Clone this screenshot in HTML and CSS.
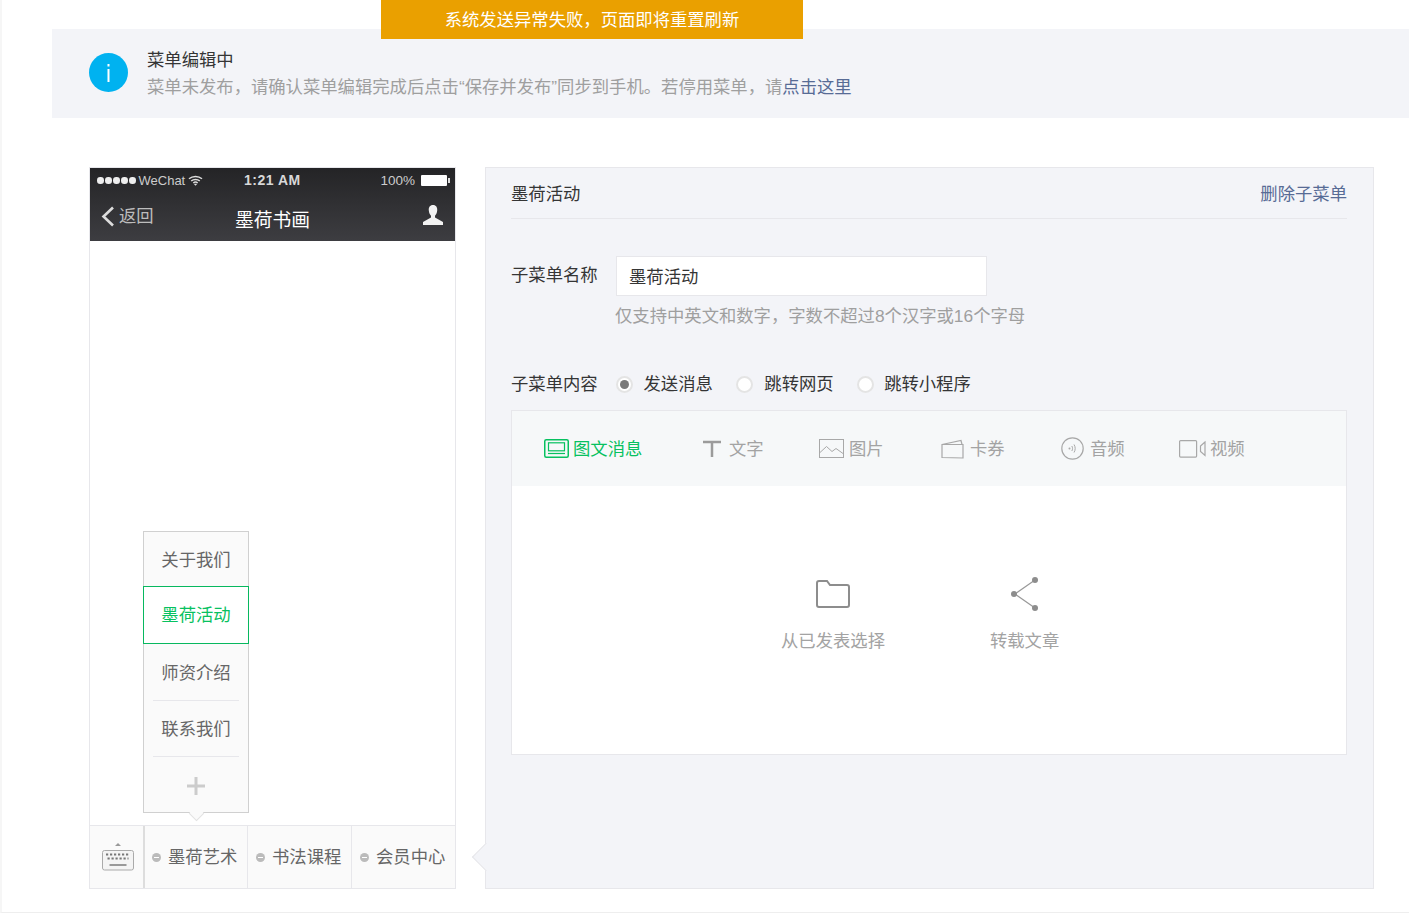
FILE: index.html
```html
<!DOCTYPE html>
<html lang="zh-CN">
<head>
  <meta charset="UTF-8" />
  <title>菜单编辑</title>
  <link rel="stylesheet" href="styles.css">
</head>
<body>
  <div class="page">
    <div class="toast">系统发送异常失败，页面即将重置刷新</div>

    <div class="notice">
      <div class="notice-icon">
        <svg width="39" height="39" viewBox="0 0 39 39">
          <circle cx="19.5" cy="19.5" r="19.5" fill="#00b2f0"/>
          <rect x="18.5" y="11" width="2" height="2.5" fill="#fff"/>
          <rect x="18.5" y="16" width="2" height="13" fill="#fff"/>
        </svg>
      </div>
      <div class="notice-text">
        <div class="notice-title">菜单编辑中</div>
        <div class="notice-desc">菜单未发布，请确认菜单编辑完成后点击“保存并发布”同步到手机。若停用菜单，请<a class="link">点击这里</a></div>
      </div>
    </div>

    <div class="main">
      <div class="phone">
        <div class="phone-head">
          <div class="status">
            <div class="status-left">
              <span class="dots"><i></i><i></i><i></i><i></i><i></i></span>
              <span class="carrier">WeChat</span>
              <svg width="15" height="11" viewBox="0 0 15 11">
                <path d="M1 3.8C4.6 .6 10.4 .6 14 3.8M3.2 6C5.6 3.9 9.4 3.9 11.8 6M5.3 8C6.5 7 8.5 7 9.7 8" fill="none" stroke="#ddd" stroke-width="1.5"/>
                <path d="M7.5 10.8 5.9 9.1C6.8 8.5 8.2 8.5 9.1 9.1Z" fill="#ddd"/>
              </svg>
            </div>
            <div class="clock">1:21 AM</div>
            <div class="status-right">
              <span>100%</span>
              <span class="battery"></span>
            </div>
          </div>
          <div class="nav">
            <div class="nav-back">
              <svg width="14" height="21" viewBox="0 0 14 21"><path d="M12 1.5 2.5 10.5 12 19.5" fill="none" stroke="#ddd" stroke-width="2.6"/></svg>
              <span>返回</span>
            </div>
            <div class="nav-title">墨荷书画</div>
            <svg class="nav-user" width="22" height="22" viewBox="0 0 22 22">
              <path d="M11 1C7.9 1 6.5 3.4 6.8 6.5 7 9 8 10.7 9 11.7V13.5L1 18V21H21V18L13 13.5V11.7C14 10.7 15 9 15.2 6.5 15.5 3.4 14.1 1 11 1Z" fill="#f2f2f2"/>
            </svg>
          </div>
        </div>

        <div class="phone-body">
          <div class="submenu">
            <div class="sub-item">关于我们</div>
            <div class="sub-item is-current">墨荷活动</div>
            <div class="sub-item">师资介绍</div>
            <div class="sub-item">联系我们</div>
            <div class="sub-add">
              <svg width="18" height="18" viewBox="0 0 18 18"><path d="M9 0V18M0 9H18" stroke="#ccc" stroke-width="3"/></svg>
            </div>
          </div>
        </div>

        <div class="tabbar">
          <div class="tab-keyboard">
            <svg width="32" height="29" viewBox="0 0 32 29">
              <path d="M13 4 16 1 19 4Z" fill="#999"/>
              <rect x=".5" y="8.5" width="31" height="19.5" rx="2" fill="#f4f4f4" stroke="#aaa"/>
              <path d="M4 12.5H28M5.5 16.5H26.5" stroke="#777" stroke-width="2.2" stroke-dasharray="2.2 1.8"/>
              <path d="M7.5 23H24.5" stroke="#999" stroke-width="2"/>
            </svg>
          </div>
          <div class="tab-cell"><span class="tab-dot"></span>墨荷艺术</div>
          <div class="tab-cell"><span class="tab-dot"></span>书法课程</div>
          <div class="tab-cell"><span class="tab-dot"></span>会员中心</div>
        </div>
      </div>

      <div class="editor">
        <div class="editor-head">
          <span>墨荷活动</span>
          <a class="link">删除子菜单</a>
        </div>

        <div class="field-name">
          <label class="field-label">子菜单名称</label>
          <div class="name-input">墨荷活动</div>
        </div>
        <div class="field-hint">仅支持中英文和数字，字数不超过8个汉字或16个字母</div>

        <div class="field-radio">
          <label class="field-label">子菜单内容</label>
          <span class="radio is-on"></span><span class="radio-text first">发送消息</span>
          <span class="radio"></span><span class="radio-text second">跳转网页</span>
          <span class="radio"></span><span class="radio-text">跳转小程序</span>
        </div>

        <div class="content-box">
          <div class="type-tabs">
            <div class="type-tab is-current">
              <svg width="25" height="19" viewBox="0 0 25 19">
                <rect x=".75" y=".75" width="23.5" height="17.5" rx="1.5" fill="none" stroke="#07c160" stroke-width="1.5"/>
                <rect x="4.5" y="3.8" width="16" height="8" fill="none" stroke="#07c160" stroke-width="1.2"/>
                <path d="M4 14.5H21" stroke="#07c160" stroke-width="1.2"/>
              </svg>
              <span>图文消息</span>
            </div>
            <div class="type-tab">
              <svg class="icon-text" width="20" height="17" viewBox="0 0 20 17"><path d="M1 2H19M10 2V17" fill="none" stroke="#9b9b9b" stroke-width="2.5"/></svg>
              <span>文字</span>
            </div>
            <div class="type-tab">
              <svg class="icon-pic" width="25" height="19" viewBox="0 0 25 19">
                <rect x=".5" y=".5" width="24" height="18" fill="none" stroke="#a8a8a8"/>
                <path d="M1 13.5 7.5 7.5 13 12.5 17 9.5 24 14.5" fill="none" stroke="#a8a8a8"/>
              </svg>
              <span>图片</span>
            </div>
            <div class="type-tab">
              <svg class="icon-card" width="23" height="20" viewBox="0 0 23 20">
                <path d="M1 5.5 20 1.5 21 5.5M1 5.5H22V19L1 18.5Z" fill="none" stroke="#a8a8a8" stroke-width="1.2"/>
              </svg>
              <span>卡券</span>
            </div>
            <div class="type-tab">
              <svg class="icon-card" width="23" height="23" viewBox="0 0 23 23">
                <circle cx="11.5" cy="11.5" r="10.7" fill="none" stroke="#a8a8a8" stroke-width="1.2"/>
                <circle cx="8.5" cy="11.5" r="1" fill="#a8a8a8"/>
                <path d="M10.8 9C11.8 10.5 11.8 12.5 10.8 14M13 7.5C14.6 10 14.6 13 13 15.5" fill="none" stroke="#a8a8a8"/>
              </svg>
              <span>音频</span>
            </div>
            <div class="type-tab">
              <svg width="27" height="18" viewBox="0 0 27 18">
                <rect x=".6" y=".6" width="17" height="16.5" rx="1" fill="none" stroke="#a8a8a8" stroke-width="1.2"/>
                <path d="M26 2 21.5 6V11.5L26 15.5Z" fill="none" stroke="#a8a8a8" stroke-width="1.2"/>
              </svg>
              <span>视频</span>
            </div>
          </div>

          <div class="pick-row">
            <div class="pick pick-folder">
              <svg width="36" height="30" viewBox="0 0 36 30">
                <path d="M2 4C2 2.9 2.7 2 4 2H12L15 6H32C33.2 6 34 6.8 34 8V26C34 27.2 33.2 28 32 28H4C2.8 28 2 27.2 2 26Z" fill="none" stroke="#8d8d8d" stroke-width="2"/>
              </svg>
              <span>从已发表选择</span>
            </div>
            <div class="pick pick-share">
              <svg width="30" height="36" viewBox="0 0 30 36">
                <path d="M25 4 5 18 25 32" fill="none" stroke="#999" stroke-width="1.2"/>
                <circle cx="25" cy="4" r="3" fill="#8d8d8d"/>
                <circle cx="4" cy="18" r="3" fill="#8d8d8d"/>
                <circle cx="25" cy="32" r="3" fill="#8d8d8d"/>
              </svg>
              <span>转载文章</span>
            </div>
          </div>
        </div>

        <span class="editor-arrow"></span>
      </div>
    </div>
  </div>
</body>
</html>
```

FILE: styles.css
```css
* {
  margin: 0;
  padding: 0;
  box-sizing: border-box;
}

body {
  font-family: "Liberation Sans", "Noto Sans CJK SC", sans-serif;
  font-size: 17.33px;
  line-height: 26px;
  color: #353535;
  background: #fff;
  overflow: hidden;
}

.page {
  position: relative;
  height: 913px;
  border-left: 2px solid #f6f6f6;
  border-bottom: 1px solid #eee;
  padding: 29px 0 0 50px;
}

.link {
  color: #576b95;
}

.toast {
  position: absolute;
  top: 0;
  left: 379px;
  width: 422px;
  height: 39px;
  line-height: 40px;
  background: #eaa000;
  color: #fff;
  text-align: center;
}

/* notice */
.notice {
  display: flex;
  height: 89px;
  background: #f3f4f8;
  padding-left: 37px;
  padding-top: 24px;
}

.notice-icon {
  width: 58px;
  flex: none;
}

.notice-text {
  margin-top: -6px;
}

.notice-title {
  line-height: 27px;
}

.notice-desc {
  color: #9f9f9f;
  line-height: 27px;
}

/* phone */
.main {
  display: flex;
  margin: 49px 0 0 37px;
}

.phone {
  width: 367px;
  height: 722px;
  border: 1px solid #e7e7eb;
  display: flex;
  flex-direction: column;
  flex: none;
}

.phone-head {
  height: 73px;
  background: linear-gradient(#242426, #3d3d41);
  color: #ddd;
}

.status {
  height: 25px;
  padding: 0 8px 0 7px;
  display: grid;
  grid-template-columns: 147px 1fr auto;
  align-items: center;
  font-size: 13px;
  line-height: 25px;
}

.status-left {
  display: flex;
  align-items: center;
}

.dots {
  display: flex;
  gap: 1.5px;
  margin-right: 3px;
}

.dots i {
  width: 6.5px;
  height: 6.5px;
  border-radius: 50%;
  background: #eee;
}

.carrier {
  margin-right: 3px;
  color: #ccc;
}

.clock {
  font-weight: bold;
  font-size: 14px;
  letter-spacing: .5px;
  color: #d8d8d8;
}

.status-right {
  display: flex;
  align-items: center;
  gap: 6px;
  font-size: 13.5px;
  color: #ccc;
}

.battery {
  position: relative;
  width: 26px;
  height: 11px;
  background: #fff;
  border-radius: 1px;
}

.battery::after {
  content: "";
  position: absolute;
  top: 3px;
  right: -3px;
  width: 2px;
  height: 5px;
  background: #ddd;
}

.nav {
  position: relative;
  display: flex;
  justify-content: space-between;
  align-items: center;
  height: 48px;
  padding: 0 11px 2px 11px;
}

.nav-back {
  display: flex;
  align-items: center;
  gap: 4px;
  color: #bdbdbd;
}

.nav-title {
  position: absolute;
  top: 13px;
  left: 145px;
  color: #fff;
  font-size: 18.8px;
  line-height: 30px;
}

.nav-user {
  margin-top: -2px;
}

.phone-body {
  position: relative;
  flex: 1;
}

/* sub menu */
.submenu {
  position: absolute;
  left: 53px;
  bottom: 12px;
  width: 106px;
  height: 282px;
  background: #fafafa;
  border: 1px solid #d0d0d0;
  text-align: center;
  color: #666;
}

.submenu::after {
  content: "";
  position: absolute;
  left: 47px;
  bottom: -7px;
  width: 10px;
  height: 10px;
  background: #fafafa;
  border: solid #e2e2e2;
  border-width: 0 1px 1px 0;
  transform: rotate(45deg);
}

.sub-item {
  height: 56.5px;
  line-height: 56px;
  margin: 0 9px;
  border-bottom: 1px solid #e7e7eb;
}

.sub-item:first-child {
  height: 54px;
  border-bottom: 0;
}

.sub-item:nth-child(3) {
  line-height: 58px;
}

.sub-item.is-current {
  position: relative;
  height: 58px;
  margin: 0 -1px;
  background: #fff;
  border: 1px solid #07b85f;
  color: #07c160;
}

.sub-add {
  display: flex;
  justify-content: center;
  padding-top: 20px;
}

/* tab bar */
.tabbar {
  height: 63px;
  display: flex;
  background: #fafafa;
  border-top: 1px solid #e7e7eb;
  color: #666;
}

.tab-keyboard {
  width: 55px;
  flex: none;
  display: flex;
  align-items: center;
  justify-content: center;
  border-right: 2px solid #ddd;
  padding: 0 0 2px 3px;
}

.tab-cell {
  flex: 1;
  display: flex;
  align-items: center;
  padding-left: 7px;
  border-right: 1px solid #e7e7eb;
}

.tab-cell + .tab-cell {
  padding-left: 8px;
}

.tab-cell:last-child {
  border-right: 0;
}

.tab-dot {
  position: relative;
  width: 9px;
  height: 9px;
  margin-right: 7px;
  border-radius: 50%;
  background: #bbb;
}

.tab-dot::after {
  content: "";
  position: absolute;
  top: 4px;
  left: 2px;
  width: 5px;
  height: 1px;
  background: #fff;
}

/* editor */
.editor {
  position: relative;
  width: 889px;
  height: 722px;
  flex: none;
  margin-left: 29px;
  padding: 0 26px 0 25px;
  background: #f3f4f8;
  border: 1px solid #e7e7eb;
}

.editor-arrow {
  position: absolute;
  left: -10px;
  bottom: 21px;
  width: 20px;
  height: 20px;
  background: #f3f4f8;
  border: solid #e7e7eb;
  border-width: 0 0 1px 1px;
  transform: rotate(45deg);
}

.editor-head {
  display: flex;
  justify-content: space-between;
  height: 51px;
  line-height: 52px;
  border-bottom: 1px solid #e7e7eb;
}

.field-name {
  display: flex;
  margin-top: 37px;
}

.field-label {
  width: 105px;
  flex: none;
}

.name-input {
  width: 371px;
  height: 40px;
  line-height: 41px;
  padding-left: 12px;
  background: #fff;
  border: 1px solid #e7e7eb;
}

.field-name .field-label {
  line-height: 38px;
}

.field-hint {
  margin: 7px 0 0 104px;
  color: #9f9f9f;
}

.field-radio {
  display: flex;
  align-items: center;
  margin-top: 42px;
  height: 26px;
}

.radio {
  width: 17px;
  height: 17px;
  flex: none;
  margin-right: 10.5px;
  border-radius: 50%;
  background: #fff;
  border: 2px solid #e4e4e4;
  position: relative;
}

.radio.is-on::after {
  content: "";
  position: absolute;
  top: 2px;
  left: 2px;
  width: 9px;
  height: 9px;
  border-radius: 50%;
  background: #7a7a7a;
}

.radio-text.first {
  margin-right: 23px;
}

.radio-text.second {
  margin-right: 23px;
  margin-left: 1px;
}

.content-box {
  width: 836px;
  height: 345px;
  margin-top: 13px;
  background: #fff;
  border: 1px solid #e7e7eb;
}

.type-tabs {
  height: 75px;
  background: #f6f8f9;
  padding-left: 32px;
  display: grid;
  grid-template-columns: 158px 117px 122px 120px 118px auto;
  align-items: center;
  color: #a3a3a3;
}

.type-tab {
  display: flex;
  align-items: center;
  gap: 4px;
}

.type-tab.is-current {
  color: #07c160;
}

.icon-text {
  margin-right: 3px;
}

.icon-pic {
  margin-right: 1px;
}

.icon-card {
  margin-right: 2px;
}

.pick-row {
  display: flex;
  padding: 90px 0 0 269px;
  gap: 105px;
  color: #a3a3a3;
}

.pick {
  display: flex;
  flex-direction: column;
  align-items: center;
}

.pick-folder svg {
  margin: 3px 0 19px 1px;
}

.pick-share svg {
  margin: 0 0 16px 1px;
}
```
